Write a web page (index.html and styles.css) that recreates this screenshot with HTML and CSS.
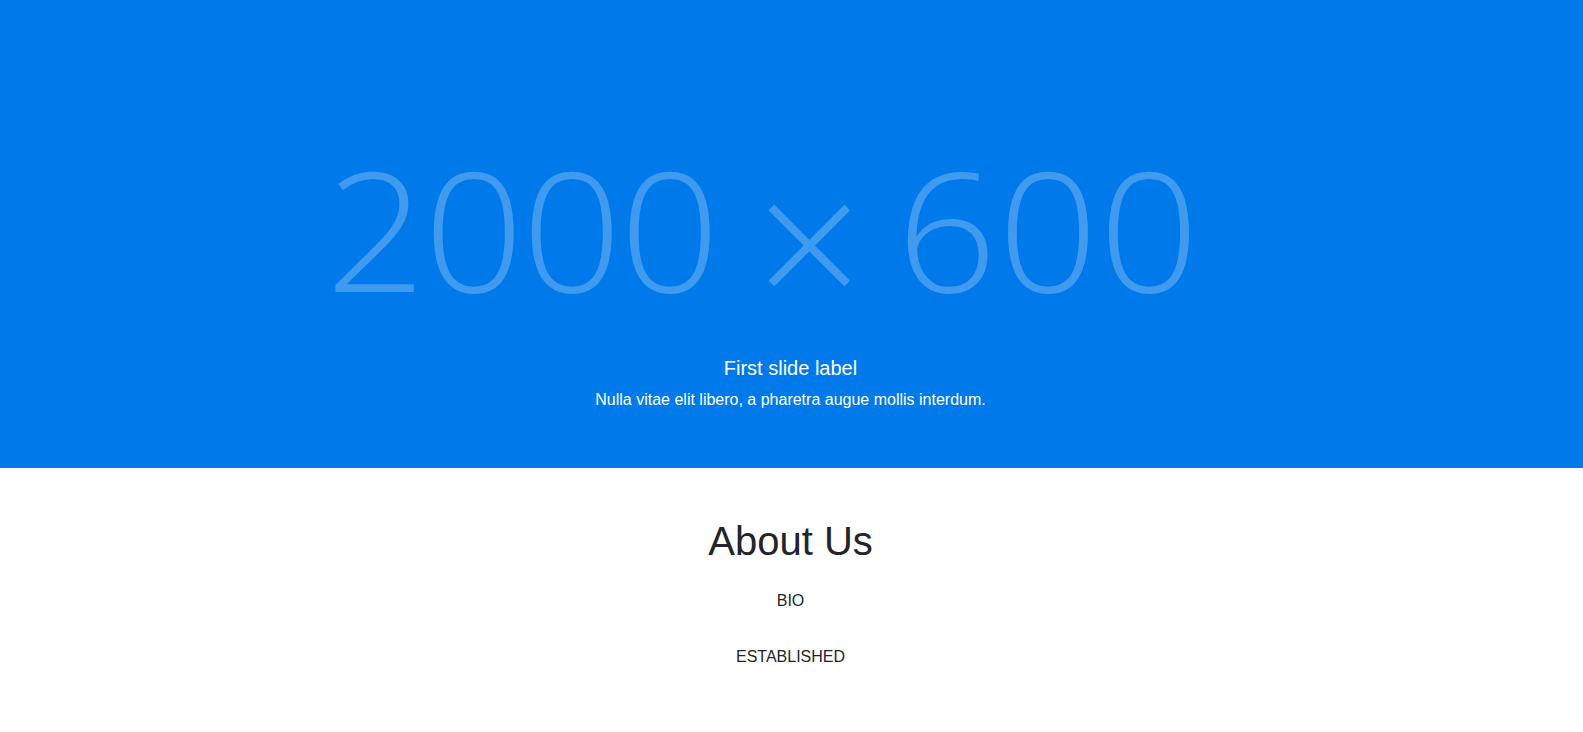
FILE: index.html
```html
<!DOCTYPE html>
<html lang="en">
<head>
<meta charset="utf-8">
<title>About</title>
<link rel="stylesheet" href="styles.css">
</head>
<body>
<div class="hero">
  <div class="placeholder"><span class="ph-num">2000</span><span class="ph-times">×</span><span class="ph-num ph-num-wide">600</span></div>
  <div class="caption">
    <h5 class="caption-title">First slide label</h5>
    <p class="caption-text">Nulla vitae elit libero, a pharetra augue mollis interdum.</p>
  </div>
</div>
<section class="about">
  <h1 class="about-title">About Us</h1>
  <p class="about-item">BIO</p>
  <p class="about-item">ESTABLISHED</p>
</section>
</body>
</html>
```
FILE: styles.css
```css
* { box-sizing: border-box; }
html, body { margin: 0; padding: 0; }
body {
  font-family: "Liberation Sans", Arial, sans-serif;
  font-size: 16px;
  line-height: 1.5;
  color: #212529;
  background: #fff;
}
.hero {
  position: relative;
  height: 467.5px;
  background: #007aeb;
  overflow: hidden;
  display: flex;
  align-items: center;
  justify-content: center;
}
.placeholder {
  display: flex;
  align-items: baseline;
  font-family: "Open Sans", sans-serif;
  font-weight: 300;
  font-size: 167px;
  line-height: 1;
  color: rgba(255, 255, 255, 0.25);
  white-space: nowrap;
  margin-right: 55px;
  margin-top: -13px;
}
.ph-num {
  letter-spacing: -2px;
  transform: scaleX(1.05);
}
.ph-num-wide {
  letter-spacing: 1px;
}
.ph-times {
  font-size: 188px;
  line-height: 0;
  margin: 0 41.25px 0 47.75px;
  translate: 0 20px;
}
.caption {
  position: absolute;
  left: 15%;
  right: 15%;
  bottom: 19.5px;
  padding: 20px 2px 20px 0;
  text-align: center;
  color: #fff;
}
.caption-title {
  margin: 0 0 8px;
  font-size: 20px;
  font-weight: 400;
  line-height: 1.2;
}
.caption-text {
  margin: 0 0 16px;
}
.about {
  text-align: center;
  padding: 49px 2px 0 0;
}
.about-title {
  margin: 0 0 24px;
  font-size: 40px;
  font-weight: 400;
  line-height: 1.2;
}
.about-item {
  margin: 0 0 32px;
}
```
